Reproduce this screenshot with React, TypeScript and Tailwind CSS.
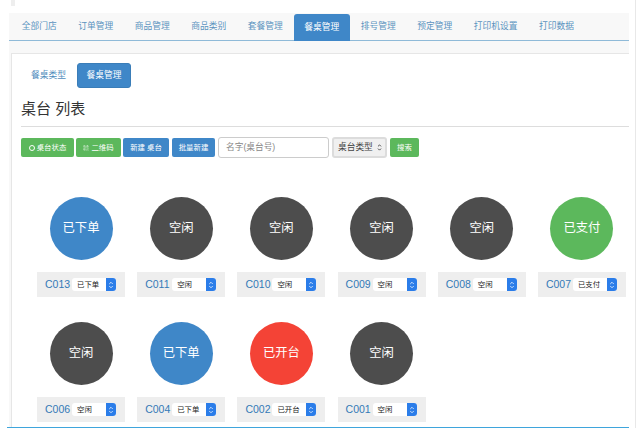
import React from 'react';
import { QrCode, ChevronUp, ChevronDown } from 'lucide-react';

const font = { fontFamily: '"Liberation Sans", "Noto Sans CJK SC", sans-serif' };

const tabs = ['全部门店', '订单管理', '商品管理', '商品类别', '套餐管理', '餐桌管理', '排号管理', '预定管理', '打印机设置', '打印数据'];

const tables = [
  { id: 'C013', status: '已下单', color: 'bg-[#3f87c8]' },
  { id: 'C011', status: '空闲', color: 'bg-[#4d4d4d]' },
  { id: 'C010', status: '空闲', color: 'bg-[#4d4d4d]' },
  { id: 'C009', status: '空闲', color: 'bg-[#4d4d4d]' },
  { id: 'C008', status: '空闲', color: 'bg-[#4d4d4d]' },
  { id: 'C007', status: '已支付', color: 'bg-[#5cb85c]' },
  { id: 'C006', status: '空闲', color: 'bg-[#4d4d4d]' },
  { id: 'C004', status: '已下单', color: 'bg-[#3f87c8]' },
  { id: 'C002', status: '已开台', color: 'bg-[#f44336]' },
  { id: 'C001', status: '空闲', color: 'bg-[#4d4d4d]' },
];

const TableCell: React.FC<{ id: string; status: string; color: string }> = ({ id, status, color }) => (
  <div className="flex flex-col items-center">
    <div className={`w-[63px] h-[63px] rounded-full flex items-center justify-center text-[12.3px] text-white ${color}`}>
      {status}
    </div>
    <div className="mt-[12px] w-[88px] h-[25px] bg-[#eeeeee] flex items-center pl-[8px]">
      <span className="text-[10.5px] text-[#337ab7] w-[27px]">{id}</span>
      <div className="w-[44px] h-[13px] rounded-[3px] bg-white flex items-center overflow-hidden">
        <span className="flex-1 pl-[5px] text-[7.4px] text-[#222222] leading-none">{status}</span>
        <span className="w-[10px] h-full bg-[#2b7de9] flex flex-col items-center justify-center text-white">
          <ChevronUp size={6} strokeWidth={3} className="-mb-[1px]" />
          <ChevronDown size={6} strokeWidth={3} className="-mt-[1px]" />
        </span>
      </div>
    </div>
  </div>
);

export default function App() {
  return (
    <div style={font} className="w-[636px] h-[428px] overflow-hidden bg-white border-r border-[#e8e8e8] pl-[9px] pr-[6px] flex flex-col">
      <div className="w-[4px] h-[6px] ml-[2px] bg-[#eeeeee] shrink-0" />
      <div className="mt-[7px] flex-1 min-h-0 flex flex-col bg-[#f8f8f8]">
        {/* Top tabs */}
        <div className="h-[28px] shrink-0 flex pl-[2px] pt-px border-b border-[#8fbad8] text-[8.75px] text-[#5b93bf]">
          {tabs.map((t, i) => (
            <div
              key={t}
              className={`px-[10.75px] flex items-center rounded-t-[3px] ${i === 5 ? 'bg-[#3f87c8] text-white h-[27px]' : 'h-[26px]'}`}
            >
              {t}
            </div>
          ))}
        </div>

        {/* Card */}
        <div className="mt-[12px] ml-[2px] flex-1 min-h-0 bg-white border-l border-t border-[#e6e6e6] pl-[9px] pt-[9px]">
          <div className="flex items-center text-[8.75px]">
            <div className="w-[56px] pl-[10px] text-[#4f8dbd]">餐桌类型</div>
            <div className="w-[54px] h-[25px] rounded-[3px] bg-[#3f87c8] border border-[#3a7db8] text-white flex items-center justify-center">
              餐桌管理
            </div>
          </div>

          <h1 className="mt-[11px] h-[20px] leading-[20px] text-[15px] text-[#333333]">桌台 列表</h1>
          <div className="mt-[7px] h-px bg-[#dddddd]" />

          {/* Toolbar */}
          <div className="mt-[10px] flex items-center text-[7.4px] text-white">
            <button className="w-[53px] h-[19px] rounded-[2px] bg-[#5cb85c] flex items-center justify-center gap-[2px]">
              <span className="w-[6px] h-[6px] rounded-full border border-white" />
              桌台状态
            </button>
            <button className="ml-[2px] w-[45px] h-[19px] rounded-[2px] bg-[#5cb85c] flex items-center justify-center gap-[2px]">
              <QrCode size={6} strokeWidth={1.5} />
              二维码
            </button>
            <button className="ml-[2px] w-[46px] h-[19px] rounded-[2px] bg-[#3f87c8]">新建 桌台</button>
            <button className="ml-[3px] w-[43px] h-[19px] rounded-[2px] bg-[#3f87c8]">批量新建</button>
            <div className="ml-[3px] w-[111px] h-[21px] rounded-[3px] bg-white border border-[#cccccc] flex items-center pl-[7px] text-[8.7px] text-[#888888]">
              名字(桌台号)
            </div>
            <div className="ml-[3px] w-[55px] h-[21px] rounded-[3px] bg-[#f0f0f0] border-2 border-[#dcdcdc] flex items-center justify-between pl-[4px] pr-[3px] text-[8.7px] text-[#444444]">
              桌台类型
              <span className="flex flex-col items-center text-[#333333]">
                <ChevronUp size={5} strokeWidth={4} className="-mb-[1px]" />
                <ChevronDown size={5} strokeWidth={4} />
              </span>
            </div>
            <button className="ml-[3px] w-[29px] h-[19px] rounded-[2px] bg-[#5cb85c]">搜索</button>
          </div>

          {/* Tables */}
          <div className="mt-[39px] ml-[16px] grid grid-cols-[repeat(6,88px)] gap-x-[12.2px] gap-y-[25px]">
            {tables.map(t => (
              <TableCell key={t.id} {...t} />
            ))}
          </div>
        </div>
        <div className="h-px -ml-[2px] shrink-0 bg-[#3fa5dc]" />
      </div>
    </div>
  );
}
